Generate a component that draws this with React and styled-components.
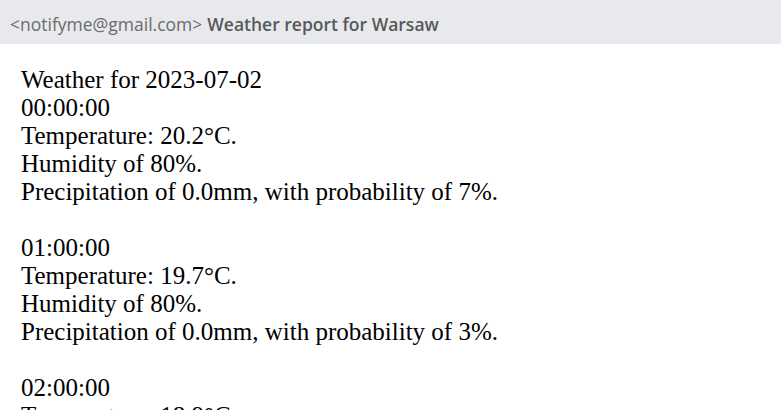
import styled, { createGlobalStyle } from 'styled-components'

const Global = createGlobalStyle`
  html, body {
    margin: 0;
    padding: 0;
    background: #ffffff;
  }
`

const Page = styled.div`
  display: flex;
  flex-direction: column;
  width: 781px;
  height: 410px;
  overflow: hidden;
`

const Header = styled.div`
  display: flex;
  align-items: center;
  gap: 5px;
  height: 44px;
  box-sizing: border-box;
  padding: 4px 10px 0;
  background: #e7e9ec;
  font-family: "Open Sans", sans-serif;
  font-size: 17.5px;
  flex-shrink: 0;
`

const Sender = styled.span`
  color: #6b6b6b;
`

const Subject = styled.span`
  color: #585858;
  font-weight: 600;
`

const Body = styled.div`
  padding: 22px 21px 0;
  font-family: "Liberation Serif", "Times New Roman", serif;
  font-size: 25px;
  line-height: 28px;
  color: #000000;
`

const Line = styled.div`
  white-space: pre;
`

const Block = styled.div`
  margin-bottom: 28px;
`

const hours = [
  { time: '00:00:00', temp: '20.2', hum: 80, rain: '0.0', prob: 7 },
  { time: '01:00:00', temp: '19.7', hum: 80, rain: '0.0', prob: 3 },
  { time: '02:00:00', temp: '18.9', hum: 82, rain: '0.0', prob: 2 },
]

function App() {
  return (
    <>
      <Global />
      <Page>
        <Header>
          <Sender>&lt;notifyme@gmail.com&gt;</Sender>
          <Subject>Weather report for Warsaw</Subject>
        </Header>
        <Body>
          <Line>Weather for 2023-07-02</Line>
          {hours.map((h) => (
            <Block key={h.time}>
              <Line>{h.time}</Line>
              <Line>Temperature: {h.temp}°C.</Line>
              <Line>Humidity of {h.hum}%.</Line>
              <Line>Precipitation of {h.rain}mm, with probability of {h.prob}%.</Line>
            </Block>
          ))}
        </Body>
      </Page>
    </>
  )
}

export default App
